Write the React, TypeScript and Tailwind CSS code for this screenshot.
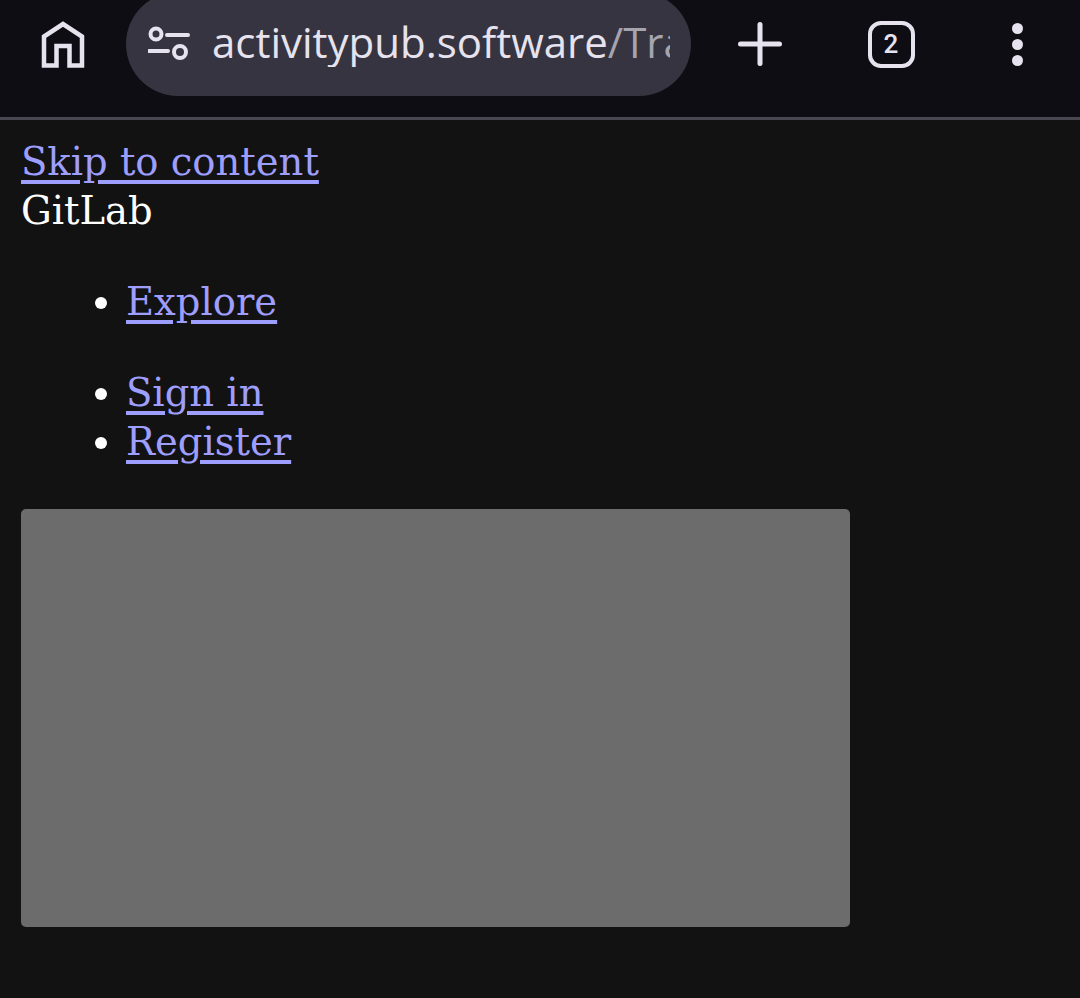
import React from 'react';

const serif = "font-['DejaVu_Serif',serif] text-[38.5px] leading-[49px]";
const linkCls = 'text-[#9e9eff] underline decoration-[4px] underline-offset-[5px]';

const Toolbar: React.FC = () => (
  <div className="h-[117px] overflow-hidden bg-[#0e0d13] text-[#e6e3ef]">
    <div className="flex h-[88px] items-center">
      <div className="flex w-[126px] shrink-0 justify-center">
        <svg width="44" height="47" viewBox="0 0 44 47" fill="none" stroke="#e6e3ef" strokeWidth="4.500">
          <path d="M3 44.500 V15.500 L22 3 L41 15.500 V44.500 H28.500 V25 H15.500 V44.500 Z" strokeLinejoin="miter" />
        </svg>
      </div>
      <div className="flex h-[104px] w-[565px] shrink-0 items-center overflow-hidden rounded-[52px] bg-[#363440]">
        <svg width="42" height="36" viewBox="0 0 42 36" fill="none" stroke="#e6e3ef" strokeWidth="4" className="ml-[22px] shrink-0">
          <circle cx="8" cy="8" r="5.500" />
          <path d="M19 9 H40 M1 25 H20" strokeLinecap="round" />
          <circle cx="32" cy="26" r="6" />
        </svg>
        <div className="mb-[4px] ml-[22px] w-[458px] overflow-hidden whitespace-nowrap font-['Open_Sans',sans-serif] text-[42px] font-normal leading-[50px]">
          activitypub.software<span className="text-[#a6a4af]">/Tra</span>
        </div>
      </div>
      <div className="flex w-[137px] shrink-0 justify-center">
        <svg width="44" height="44" viewBox="0 0 44 44" stroke="#e6e3ef" strokeWidth="5" strokeLinecap="round">
          <path d="M22 2.500 V41.500 M2.500 22 H41.500" />
        </svg>
      </div>
      <div className="ml-[-3px] flex w-[132px] shrink-0 justify-center">
        <div className="flex h-[47px] w-[47px] items-center justify-center rounded-[13px] border-[4px] border-[#e6e3ef] font-['Roboto',sans-serif] text-[26px] font-medium">
          2
        </div>
      </div>
      <div className="ml-[1px] flex w-[119px] shrink-0 flex-col items-center gap-[5px]">
        <div className="h-[11px] w-[11px] rounded-full bg-[#e6e3ef]" />
        <div className="h-[11px] w-[11px] rounded-full bg-[#e6e3ef]" />
        <div className="h-[11px] w-[11px] rounded-full bg-[#e6e3ef]" />
      </div>
    </div>
  </div>
);

const App: React.FC = () => (
  <div className="h-[998px] w-[1080px] overflow-hidden bg-[#121212]">
    <Toolbar />
    <div className="h-[3px] bg-[#48474f]" />
    <div className={`px-[21px] pt-[17px] text-white ${serif}`}>
      <div>
        <a href="#content" className={linkCls}>Skip to content</a>
      </div>
      <div>GitLab</div>
      <ul className="mt-[42px] list-disc pl-[105px]">
        <li><a href="#explore" className={linkCls}>Explore</a></li>
      </ul>
      <ul className="mt-[42px] list-disc pl-[105px]">
        <li><a href="#signin" className={linkCls}>Sign in</a></li>
        <li><a href="#register" className={linkCls}>Register</a></li>
      </ul>
      <div className="mt-[43px] h-[418px] w-[829px] rounded-[5px] bg-[#6c6c6c]" />
    </div>
  </div>
);

export default App;
